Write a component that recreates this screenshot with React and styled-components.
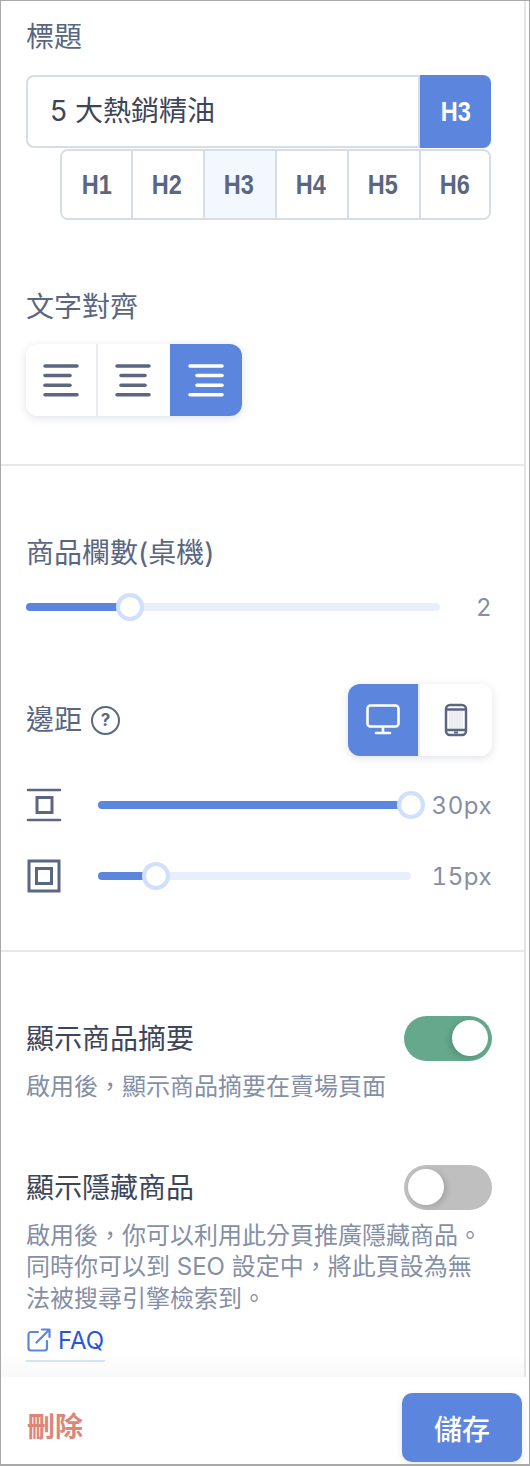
import React from "react";
import styled, { createGlobalStyle } from "styled-components";

const primary = "#5c86de";
const slate = "#5a6682";

const GlobalStyle = createGlobalStyle`
  html, body {
    margin: 0;
    padding: 0;
    background: #ffffff;
  }
  * {
    box-sizing: border-box;
  }
`;

const Frame = styled.div`
  display: flex;
  flex-direction: column;
  width: 530px;
  height: 1466px;
  border: 1px solid #a9a9a9;
  border-bottom-width: 2px;
  background: #ffffff;
  font-family: "Inter", "Noto Sans CJK TC", sans-serif;
  overflow: hidden;
`;

const Scroll = styled.div`
  position: relative;
  flex: 1;
  width: 525px;
  border-right: 2px solid #e4e4e4;

  &::after {
    content: "";
    position: absolute;
    left: 0;
    right: 0;
    bottom: 0;
    height: 24px;
    background: linear-gradient(rgba(240, 240, 240, 0), rgba(240, 240, 240, 0.45));
  }
`;

const Section = styled.section`
  display: flex;
  flex-direction: column;
  padding: ${(p) => p.$top}px 32px ${(p) => p.$bottom}px 25px;
  border-bottom: ${(p) => (p.$last ? "none" : "2px solid #e8e8e8")};
`;

const Label = styled.div`
  height: 40px;
  margin-top: ${(p) => p.$mt || 0}px;
  font-size: 28px;
  line-height: 40px;
  color: ${slate};
`;

const TitleGroup = styled.div`
  display: flex;
  height: 73px;
  margin: 18px 1px 0 0;
`;

const TitleInput = styled.div`
  flex: 1;
  padding-left: 22px;
  border: 2px solid #d5dee8;
  border-right: none;
  border-radius: 8px 0 0 8px;
  font-size: 28px;
  line-height: 68px;
  color: #3d4559;
`;

const HeadingText = styled.span`
  display: inline-block;
  font-family: "Liberation Sans", sans-serif;
  font-size: 28px;
  font-weight: 700;
  transform: scaleX(0.84);
`;

const TitleTag = styled.div`
  display: flex;
  align-items: center;
  justify-content: center;
  width: 73px;
  border-left: 2px solid #d5dee8;
  border-radius: 0 8px 8px 0;
  background: ${primary};
  color: #ffffff;
`;

const HeadingPicker = styled.div`
  display: flex;
  height: 71px;
  margin: 1px 1px 0 34px;
  border: 2px solid #d5dee8;
  border-radius: 8px;
  overflow: hidden;
`;

const HeadingOption = styled.div`
  display: flex;
  flex: none;
  align-items: center;
  justify-content: center;
  width: 72px;
  padding-right: 2px;
  border-left: 2px solid #d5dee8;
  background: ${(p) => (p.$active ? "#f3f8ff" : "#ffffff")};
  color: ${slate};

  &:first-child {
    width: 69px;
    padding-right: 0;
    border-left: none;
  }
  &:last-child {
    width: 70px;
    padding-right: 0;
  }
`;

const ButtonGroup = styled.div`
  display: flex;
  align-self: ${(p) => (p.$end ? "auto" : "flex-start")};
  height: 72px;
  margin-top: ${(p) => p.$mt || 0}px;
  border-radius: 12px;
  box-shadow: 0 2px 8px rgba(60, 70, 100, 0.16);
  overflow: hidden;
`;

const GroupButton = styled.div`
  display: flex;
  align-items: center;
  justify-content: center;
  width: 72px;
  border-left: 2px solid ${(p) => (p.$active ? "#ffffff" : "#e8ebf0")};
  background: ${(p) => (p.$active ? primary : "#ffffff")};
  background-clip: padding-box;
  color: ${(p) => (p.$active ? "#ffffff" : slate)};

  &:first-child {
    width: 70px;
    border-left: none;
  }
  &:last-child {
    width: 74px;
  }
`;

const SliderRow = styled.div`
  display: flex;
  align-items: center;
  height: 28px;
  margin-top: ${(p) => p.$mt}px;
`;

const RowIcon = styled.svg`
  flex: none;
  width: 36px;
  height: 36px;
  margin-right: 36px;
  color: ${slate};
`;

const Track = styled.div`
  position: relative;
  flex: 1;
  height: 8px;
  border-radius: 4px;
  background: #e8effc;
`;

const TrackFill = styled.div`
  height: 100%;
  border-radius: 4px;
  background: ${primary};
`;

const Thumb = styled.div`
  position: absolute;
  top: 50%;
  width: 28px;
  height: 28px;
  border: 4px solid #d0dffb;
  border-radius: 50%;
  background: #ffffff;
  transform: translate(-50%, -50%);
`;

const SliderValue = styled.div`
  flex: none;
  width: ${(p) => p.$width}px;
  font-size: 24px;
  font-variant-numeric: tabular-nums;
  letter-spacing: 0.5px;
  text-align: right;
  color: #858fa5;
`;

const MarginHeader = styled.div`
  display: flex;
  align-items: center;
  justify-content: space-between;
  margin-top: 63px;
`;

const MarginTitle = styled.div`
  display: flex;
  align-items: center;
  gap: 9px;
`;

const HelpMark = styled.span`
  display: flex;
  align-items: center;
  justify-content: center;
  width: 29px;
  height: 29px;
  border: 2.5px solid ${slate};
  border-radius: 50%;
  font-size: 17px;
  font-weight: 700;
  color: ${slate};
`;

const SwitchRow = styled.div`
  display: flex;
  align-items: center;
  justify-content: space-between;
  height: 45px;
  margin-top: ${(p) => p.$mt || 0}px;
`;

const SwitchLabel = styled.div`
  padding-bottom: 3px;
  font-size: 28px;
  color: #3d4559;
`;

const SwitchTrack = styled.div`
  position: relative;
  width: 88px;
  height: 45px;
  border-radius: 23px;
  background: ${(p) => (p.$on ? "#65a98c" : "#bfbfbf")};
`;

const SwitchKnob = styled.div`
  position: absolute;
  top: 4px;
  left: ${(p) => (p.$on ? "48px" : "4px")};
  width: 36px;
  height: 36px;
  border-radius: 50%;
  background: #ffffff;
  box-shadow: ${(p) => (p.$on ? "-3px 2px 6px" : "3px 2px 6px")} rgba(0, 0, 0, 0.14);
`;

const Hint = styled.p`
  margin: 10px 0 0;
  font-size: 24px;
  line-height: 31.7px;
  color: #858fa5;
`;

const FaqLink = styled.a`
  display: inline-flex;
  align-items: center;
  align-self: flex-start;
  gap: 7px;
  height: 42px;
  margin-top: 5px;
  padding: 1px 1px 0;
  border-bottom: 2px solid #d0dffb;
  font-size: 24px;
  color: #2a55d4;
`;

const Footer = styled.footer`
  display: flex;
  align-items: center;
  justify-content: space-between;
  height: 87px;
  padding: 0 7px 0 26px;
`;

const DeleteButton = styled.div`
  margin-top: 8px;
  font-size: 28px;
  font-weight: 700;
  color: #dd8576;
`;

const SaveButton = styled.div`
  display: flex;
  align-items: center;
  justify-content: center;
  width: 120px;
  height: 69px;
  margin-top: 14px;
  border-radius: 10px;
  background: ${primary};
  box-shadow: 0 2px 6px rgba(60, 70, 100, 0.14);
  font-size: 28px;
  font-weight: 500;
  color: #ffffff;
`;

const AlignIcon = ({ lines }) => (
  <svg width="40" height="36" viewBox="0 0 40 36" fill="none" stroke="currentColor" strokeWidth="3.5" strokeLinecap="round">
    {lines.map(([x1, x2], i) => (
      <line key={i} x1={x1} x2={x2} y1={4 + i * 9.6} y2={4 + i * 9.6} />
    ))}
  </svg>
);

const DesktopIcon = () => (
  <svg width="36" height="34" viewBox="0 0 36 34" fill="none" stroke="currentColor" strokeWidth="2.600" strokeLinecap="round">
    <rect x="2.500" y="2.500" width="31" height="21" rx="3" />
    <path d="M18 24v5M11 30h14" />
  </svg>
);

const PhoneIcon = () => (
  <svg width="24" height="34" viewBox="0 0 24 34" fill="none" stroke="currentColor" strokeWidth="2.500">
    <rect x="5" y="6" width="14" height="21" fill="#eceef2" stroke="none" />
    <rect x="2" y="2" width="20" height="30" rx="4" />
    <path d="M2 6.500h20M2 27h20" />
    <path d="M10 29.500h4" strokeWidth="2" />
  </svg>
);

const PaddingYIcon = () => (
  <RowIcon viewBox="0 0 36 36" fill="none" stroke="currentColor" strokeWidth="3">
    <path d="M2 3h32M2 33h32" strokeLinecap="round" strokeWidth="2.500" />
    <rect x="11" y="10.500" width="15" height="15" />
  </RowIcon>
);

const PaddingAllIcon = () => (
  <RowIcon viewBox="0 0 36 36" fill="none" stroke="currentColor" strokeWidth="3">
    <rect x="3" y="3" width="30" height="30" />
    <rect x="10.500" y="10.500" width="15" height="15" />
  </RowIcon>
);

const ExternalIcon = () => (
  <svg width="24" height="24" viewBox="0 0 24 24" fill="none" stroke={primary} strokeWidth="2.200" strokeLinecap="round" strokeLinejoin="round">
    <path d="M11 4H4a2.500 2.500 0 0 0-2.500 2.500V20A2.500 2.500 0 0 0 4 22.500h13.500A2.500 2.500 0 0 0 20 20v-7" />
    <path d="M9.500 14.500 22 2M15 1.500h7.500V9" />
  </svg>
);

const Slider = ({ percent, value, width, mt, icon }) => (
  <SliderRow $mt={mt}>
    {icon}
    <Track>
      <TrackFill style={{ width: `${percent}%` }} />
      <Thumb style={{ left: `${percent}%` }} />
    </Track>
    <SliderValue $width={width}>{value}</SliderValue>
  </SliderRow>
);

const headings = ["H1", "H2", "H3", "H4", "H5", "H6"];

export default function App() {
  return (
    <Frame lang="zh-TW">
      <GlobalStyle />
      <Scroll>
        <Section $top={16} $bottom={48}>
          <Label>標題</Label>
          <TitleGroup>
            <TitleInput>5 大熱銷精油</TitleInput>
            <TitleTag>
              <HeadingText>H3</HeadingText>
            </TitleTag>
          </TitleGroup>
          <HeadingPicker>
            {headings.map((h) => (
              <HeadingOption key={h} $active={h === "H3"}>
                <HeadingText>{h}</HeadingText>
              </HeadingOption>
            ))}
          </HeadingPicker>
          <Label $mt={67}>文字對齊</Label>
          <ButtonGroup $mt={17}>
            <GroupButton>
              <AlignIcon lines={[[4, 36], [4, 29], [4, 29], [4, 36]]} />
            </GroupButton>
            <GroupButton>
              <AlignIcon lines={[[4, 36], [8, 32], [8, 32], [4, 36]]} />
            </GroupButton>
            <GroupButton $active>
              <AlignIcon lines={[[4, 36], [11, 36], [11, 36], [4, 36]]} />
            </GroupButton>
          </ButtonGroup>
        </Section>
        <Section $top={67} $bottom={60}>
          <Label>商品欄數(桌機)</Label>
          <Slider percent={25} value="2" width={52} mt={20} />
          <MarginHeader>
            <MarginTitle>
              <Label>邊距</Label>
              <HelpMark>?</HelpMark>
            </MarginTitle>
            <ButtonGroup $end>
              <GroupButton $active>
                <DesktopIcon />
              </GroupButton>
              <GroupButton>
                <PhoneIcon />
              </GroupButton>
            </ButtonGroup>
          </MarginHeader>
          <Slider percent={100} value="30px" width={81} mt={35} icon={<PaddingYIcon />} />
          <Slider percent={18.5} value="15px" width={81} mt={43} icon={<PaddingAllIcon />} />
        </Section>
        <Section $top={64} $bottom={0} $last>
          <SwitchRow>
            <SwitchLabel>顯示商品摘要</SwitchLabel>
            <SwitchTrack $on>
              <SwitchKnob $on />
            </SwitchTrack>
          </SwitchRow>
          <Hint>啟用後，顯示商品摘要在賣場頁面</Hint>
          <SwitchRow $mt={62}>
            <SwitchLabel>顯示隱藏商品</SwitchLabel>
            <SwitchTrack>
              <SwitchKnob />
            </SwitchTrack>
          </SwitchRow>
          <Hint>
            啟用後，你可以利用此分頁推廣隱藏商品。
            <br />
            同時你可以到 SEO 設定中，將此頁設為無
            <br />
            法被搜尋引擎檢索到。
          </Hint>
          <FaqLink>
            <ExternalIcon />
            FAQ
          </FaqLink>
        </Section>
      </Scroll>
      <Footer>
        <DeleteButton>刪除</DeleteButton>
        <SaveButton>儲存</SaveButton>
      </Footer>
    </Frame>
  );
}
